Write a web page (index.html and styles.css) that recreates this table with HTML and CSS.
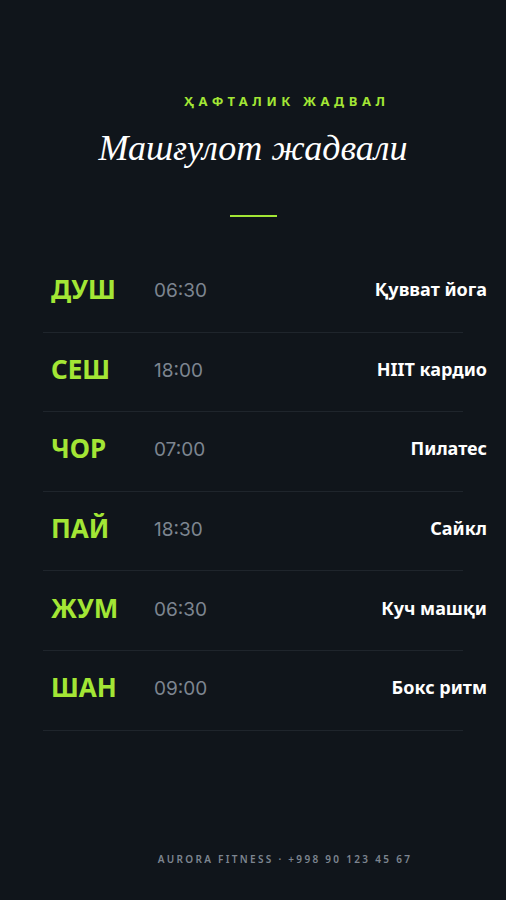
FILE: index.html
```html
<!DOCTYPE html>
<html lang="uz">
<head>
<meta charset="utf-8">
<title>Машғулот жадвали</title>
<link rel="stylesheet" href="styles.css">
</head>
<body>
<main class="page">
  <header class="head">
    <p class="eyebrow">ҲАФТАЛИК ЖАДВАЛ</p>
    <h1 class="title">Машғулот жадвали</h1>
    <div class="rule"></div>
  </header>
  <ul class="list">
    <li class="row"><span class="day">ДУШ</span><span class="time">06:30</span><span class="cls">Қувват йога</span></li>
    <li class="row"><span class="day">СЕШ</span><span class="time">18:00</span><span class="cls">HIIT кардио</span></li>
    <li class="row"><span class="day">ЧОР</span><span class="time">07:00</span><span class="cls">Пилатес</span></li>
    <li class="row"><span class="day">ПАЙ</span><span class="time">18:30</span><span class="cls">Сайкл</span></li>
    <li class="row"><span class="day">ЖУМ</span><span class="time">06:30</span><span class="cls">Куч машқи</span></li>
    <li class="row"><span class="day">ШАН</span><span class="time">09:00</span><span class="cls">Бокс ритм</span></li>
  </ul>
  <footer class="foot">AURORA FITNESS · +998 90 123 45 67</footer>
</main>
</body>
</html>
```
FILE: styles.css
```css
html, body {
  margin: 0;
  padding: 0;
  background: #10151b;
}
body {
  font-family: "Noto Sans", "Open Sans", sans-serif;
  color: #ffffff;
}
.page {
  width: 506px;
  height: 900px;
  display: flex;
  flex-direction: column;
  align-items: center;
  box-sizing: border-box;
  padding-top: 93px;
}
.head {
  display: flex;
  flex-direction: column;
  align-items: center;
}
.eyebrow {
  margin: 0 0 0 68px;
  font-size: 13px;
  line-height: 17px;
  font-weight: 700;
  letter-spacing: 4.6px;
  color: #a3e635;
}
.title {
  margin: 16px 0 0;
  font-family: "Liberation Serif", serif;
  font-style: italic;
  font-weight: 400;
  font-size: 36px;
  line-height: 44px;
  color: #ffffff;
}
.rule {
  width: 47px;
  height: 2px;
  margin-top: 45px;
  background: #a3e635;
}
.list {
  list-style: none;
  margin: 36px 0 0;
  padding: 0;
  width: 420px;
}
.row {
  display: flex;
  align-items: center;
  border-bottom: 1px solid #1f252c;
  padding-left: 8px;
  padding-bottom: 6px;
  box-sizing: border-box;
  height: 79.6px;
}
.day {
  width: 103px;
  font-size: 26px;
  font-weight: 700;
  color: #a3e635;
}
.time {
  font-family: "Inter", "Noto Sans", sans-serif;
  font-size: 19px;
  padding-top: 3px;
  color: #7d8590;
}
.cls {
  margin-left: auto;
  margin-right: -24px;
  font-size: 18px;
  font-weight: 700;
  color: #ffffff;
}
.foot {
  margin-top: auto;
  margin-bottom: 34px;
  margin-left: 64px;
  font-size: 10px;
  font-weight: 600;
  letter-spacing: 2.3px;
  color: #7d8590;
}
```
